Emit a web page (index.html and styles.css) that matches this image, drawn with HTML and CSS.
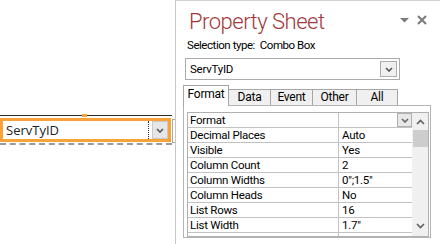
FILE: index.html
```html
<!DOCTYPE html>
<html lang="en">
<head>
    <meta charset="UTF-8">
    <title>Property Sheet</title>
    <link rel="stylesheet" href="styles.css">
</head>
<body>
    <div class="canvas">
        <div class="ctl">
            <span class="ctl-handle"></span>
            <div class="ctl-box">
                <span class="ctl-text">ServTyID</span>
                <span class="ctl-btn">
                    <svg width="8" height="5" viewBox="0 0 8 5"><path d="M1 1 L4 4 L7 1" fill="none" stroke="#555" stroke-width="1.6"/></svg>
                </span>
            </div>
            <span class="ctl-side"></span>
        </div>
    </div>

    <div class="sheet">
        <div class="sheet-head">
            <h1>Property Sheet</h1>
            <div class="sheet-tools">
                <svg width="9" height="5" viewBox="0 0 9 5"><path d="M0 0 H9 L4.5 4.5 Z" fill="#7a7a7a"/></svg>
                <svg width="10" height="10" viewBox="0 0 10 10"><path d="M1 1 L9 9 M9 1 L1 9" stroke="#7a7a7a" stroke-width="2"/></svg>
            </div>
        </div>
        <div class="sel">Selection type:&nbsp; Combo Box</div>
        <div class="combo">
            <span class="combo-text">ServTyID</span>
            <span class="combo-btn">
                <svg width="8" height="5" viewBox="0 0 8 5"><path d="M1 1 L4 4 L7 1" fill="none" stroke="#555" stroke-width="1.6"/></svg>
            </span>
        </div>

        <div class="tabs">
            <div class="tab active">Format</div>
            <div class="tab">Data</div>
            <div class="tab">Event</div>
            <div class="tab">Other</div>
            <div class="tab">All</div>
        </div>
        <div class="tab-body">
            <div class="grid-box">
                <div class="grid">
                    <div class="row">
                        <div class="cell name">Format</div>
                        <div class="cell val drop">
                            <span class="cell-btn">
                                <svg width="8" height="5" viewBox="0 0 8 5"><path d="M1 1 L4 4 L7 1" fill="none" stroke="#666" stroke-width="1.6"/></svg>
                            </span>
                        </div>
                    </div>
                    <div class="row"><div class="cell name">Decimal Places</div><div class="cell val">Auto</div></div>
                    <div class="row"><div class="cell name">Visible</div><div class="cell val">Yes</div></div>
                    <div class="row"><div class="cell name">Column Count</div><div class="cell val">2</div></div>
                    <div class="row"><div class="cell name">Column Widths</div><div class="cell val">0";1.5"</div></div>
                    <div class="row"><div class="cell name">Column Heads</div><div class="cell val">No</div></div>
                    <div class="row"><div class="cell name">List Rows</div><div class="cell val">16</div></div>
                    <div class="row"><div class="cell name">List Width</div><div class="cell val">1.7"</div></div>
                    <div class="row"><div class="cell name"></div><div class="cell val"></div></div>
                </div>
                <div class="vscroll">
                    <svg width="9" height="6" viewBox="0 0 9 6"><path d="M1 5 L4.5 1.5 L8 5" fill="none" stroke="#606060" stroke-width="1.6"/></svg>
                    <span class="thumb"></span>
                    <span class="track"></span>
                    <svg width="9" height="6" viewBox="0 0 9 6"><path d="M1 1 L4.5 4.5 L8 1" fill="none" stroke="#606060" stroke-width="1.6"/></svg>
                </div>
            </div>
        </div>
    </div>
</body>
</html>
```

FILE: styles.css
```css
* { box-sizing: border-box; }
html, body { margin: 0; }
body { width: 440px; height: 244px; overflow: hidden; display: flex; background: #fff; color: #000; font-family: Roboto, "Open Sans", "Liberation Sans", sans-serif; }

/* form design surface */
.canvas { width: 175px; flex: none; padding-top: 115px; }
.ctl { position: relative; width: 172px; border-top: 1px solid #2b2b2b; border-bottom: 2px dashed #9a9a9a; padding: 2px 0 1px; }
.ctl-handle { position: absolute; left: 82px; top: -2px; width: 5px; height: 3px; background: #f7a234; }
.ctl-box { height: 24px; margin-right: 1px; border: 3px solid #f8a33a; display: flex; align-items: center; }
.ctl-text { flex: 1; padding-left: 3px; font-family: "Open Sans", sans-serif; font-size: 13px; color: #222; border-right: 1px dotted #333; height: 18px; line-height: 18px; }
.ctl-btn { width: 16px; height: 18px; margin-left: 3px; background: #e6e6e6; border: 1px solid #c8c8c8; display: flex; align-items: center; justify-content: center; }
.ctl-side { position: absolute; right: -3px; top: 3px; width: 3px; height: 24px; border: 1px solid #a8a8a8; border-right: none; }

/* property sheet */
.sheet { flex: 1; border-left: 1px solid #c6c6c6; border-top: 1px solid #d2d2d2; padding: 0 0 0 7px; font-size: 11.5px; letter-spacing: -0.25px; }
.sheet-head { display: flex; align-items: flex-start; height: 36px; }
.sheet-head h1 { margin: 7px 0 0 6px; font-size: 22px; font-weight: 300; color: #a4373a; line-height: 28px; letter-spacing: -0.5px; }
.sheet-tools { margin-left: auto; margin-right: 13px; margin-top: 14px; display: flex; align-items: center; gap: 8px; }
.sel { margin-left: 4px; height: 21px; line-height: 16px; letter-spacing: -0.45px; }
.combo { margin-left: 2px; width: 215px; height: 22px; border: 1px solid #ababab; display: flex; align-items: center; padding: 0 2px 0 4px; }
.combo-text { flex: 1; }
.combo-btn { width: 17px; height: 16px; background: #f0f0f0; border: 1px solid #adadad; display: flex; align-items: center; justify-content: center; }

.tabs { display: flex; align-items: flex-end; height: 21px; margin-top: 4px; }
.tab { height: 16px; border: 1px solid #a6a6a6; border-bottom: none; border-left: none; background: #f0f0f0; text-align: center; line-height: 15px; font-size: 12px; }
.tab:nth-child(2) { width: 42px; }
.tab:nth-child(3) { width: 42px; }
.tab:nth-child(4) { width: 44px; }
.tab:nth-child(5) { width: 41px; }
.tab.active { width: 46px; height: 21px; background: #fff; border-left: 1px solid #a6a6a6; line-height: 17px; position: relative; top: 1px; }

.tab-body { width: 248px; height: 133px; border: 1px solid #b4b4b4; padding: 6px 1px 0 3px; }
.grid-box { display: flex; height: 125px; border: 1px solid #b0b0b0; }
.grid { width: 225px; overflow: hidden; }
.row { display: flex; height: 15px; border-bottom: 1px solid #c2c2c2; }
.cell { height: 14px; line-height: 14px; white-space: nowrap; overflow: hidden; }
.cell.name { width: 151px; padding-left: 2px; border-right: 1px solid #c2c2c2; }
.cell.val { flex: 1; padding-left: 3px; }
.cell.drop { padding: 0; display: flex; justify-content: flex-end; }
.cell-btn { width: 15px; height: 14px; background: #e8e8e8; border: 1px solid #b0b0b0; display: flex; align-items: center; justify-content: center; }
.vscroll { width: 16px; background: #f0f0f0; display: flex; flex-direction: column; align-items: center; padding: 6px 0 7px; }
.thumb { width: 15px; height: 17px; margin-top: 5px; background: #cdcdcd; }
.track { flex: 1; }
```
